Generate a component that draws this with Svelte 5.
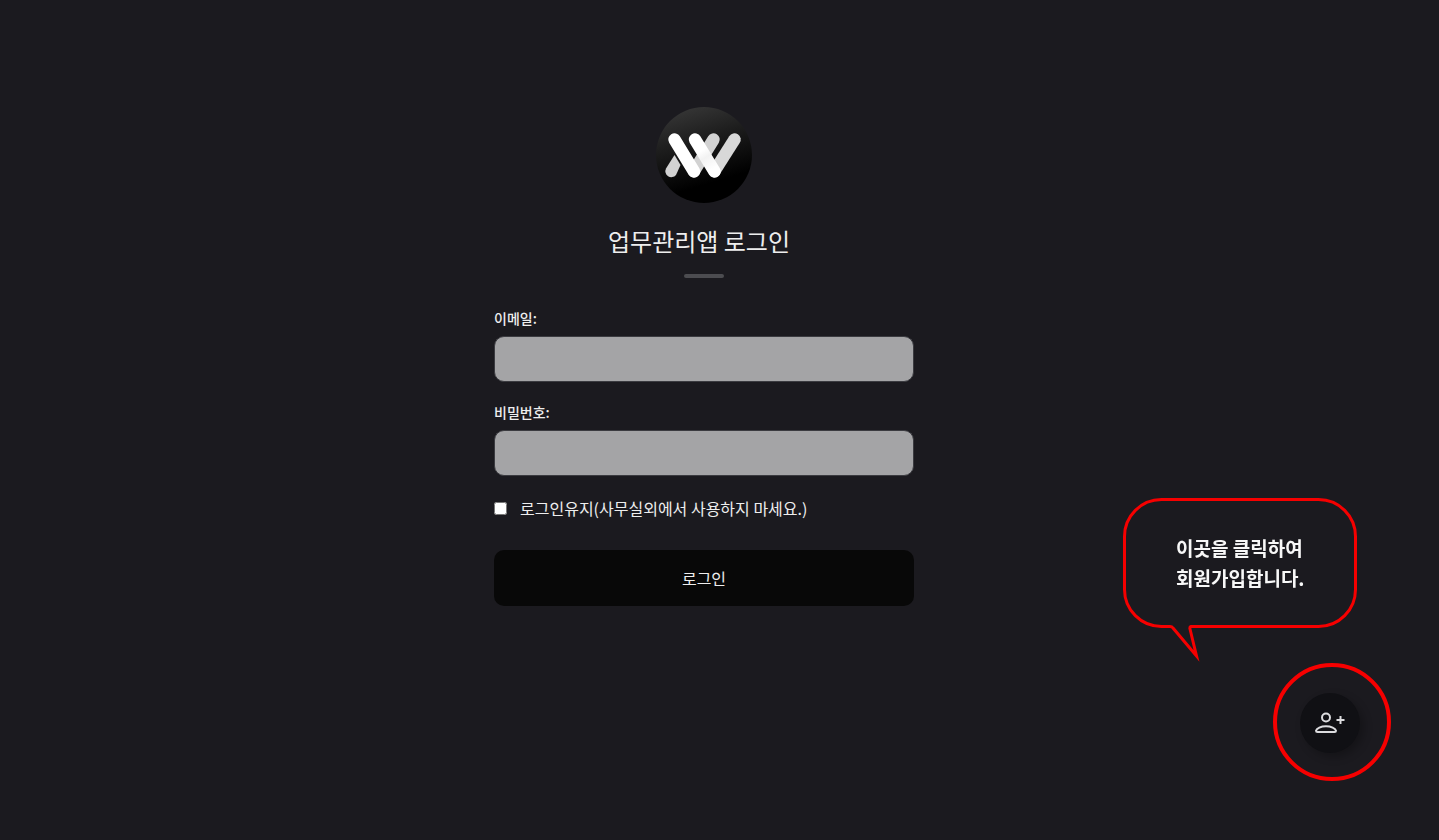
<script>
    let email = ''
    let password = ''
    let keepLogin = false
</script>

<main>
    <form class="login" on:submit|preventDefault>
        <svg class="logo" viewBox="0 0 96 96" role="img" aria-label="W">
            <defs>
                <linearGradient id="disc" x1="0.3" y1="0" x2="0.6" y2="1">
                    <stop offset="0" stop-color="#363636"/>
                    <stop offset="0.35" stop-color="#1d1d1d"/>
                    <stop offset="0.8" stop-color="#000"/>
                </linearGradient>
                <linearGradient id="cross" gradientUnits="userSpaceOnUse" x1="39" y1="32" x2="59" y2="65">
                    <stop offset="0.35" stop-color="#fff"/>
                    <stop offset="0.55" stop-color="#f2f2f2"/>
                    <stop offset="0.9" stop-color="#fff"/>
                </linearGradient>
            </defs>
            <circle cx="48" cy="48" r="48" fill="url(#disc)"/>
            <path d="M18.500 48 24.500 58 20 68A6 6 0 0 1 10 61.500Z" fill="#d2d2d2"/>
            <g fill="none" stroke-width="12.500" stroke-linecap="round">
                <path d="M38 64 57.500 32.500" stroke="#d2d2d2"/>
                <path d="M58.500 64 78.500 32.500" stroke="#d8d8d8"/>
                <path d="M18.500 32.500 38 64.500" stroke="#fff"/>
                <path d="M39 32.500 58.500 64.500" stroke="url(#cross)"/>
            </g>
        </svg>

        <h1>업무관리앱 로그인</h1>
        <div class="bar"></div>

        <div class="field">
            <label for="email">이메일:</label>
            <input id="email" type="email" bind:value={email}>
        </div>
        <div class="field">
            <label for="password">비밀번호:</label>
            <input id="password" type="password" bind:value={password}>
        </div>

        <label class="keep">
            <input type="checkbox" bind:checked={keepLogin}>
            <span>로그인유지(사무실외에서 사용하지 마세요.)</span>
        </label>

        <button type="submit" class="submit">로그인</button>
    </form>
</main>

<aside class="guide">
    <div class="bubble">
        <svg viewBox="0 0 234 166" fill="none" stroke="#f60000" stroke-width="3" stroke-miterlimit="10">
            <path d="M38.500 1.500H195.500A37 37 0 0 1 232.500 38.500V91.500A37 37 0 0 1 195.500 128.500H68Q66.500 129 67 131L73.500 158 50 130Q49 128.500 47 128.500H38.500A37 37 0 0 1 1.500 91.500V38.500A37 37 0 0 1 38.500 1.500Z"/>
        </svg>
        <p>이곳을 클릭하여<br>회원가입합니다.</p>
    </div>
    <div class="ring">
        <button type="button" class="join" aria-label="회원가입">
            <svg viewBox="0 0 32 24" fill="none" stroke="#dcdcdf" stroke-width="2">
                <circle cx="12" cy="6.500" r="4"/>
                <path d="M26.500 5V13M22.500 9H30.500"/>
                <path d="M2 19.800C2.500 17.300 7 15.200 12 15.200S21.500 17.300 22 19.800Q22 21 20.500 21H3.500Q2 21 2 19.800Z"/>
            </svg>
        </button>
    </div>
</aside>

<style>
    :global(body) {
        background: #1b1a1f;
        color: #eee;
        font-family: "Noto Sans CJK KR", sans-serif;
    }

    main {
        display: flex;
        justify-content: center;
        padding: 107px 31px 0 0;
    }

    .login {
        display: flex;
        flex-direction: column;
        width: 420px;
    }

    .logo {
        align-self: center;
        width: 96px;
        height: 96px;
    }

    h1 {
        margin: 20px 0 0;
        padding-right: 10px;
        font-size: 24px;
        font-weight: 400;
        line-height: 36px;
        text-align: center;
    }

    .bar {
        align-self: center;
        width: 40px;
        height: 4px;
        margin: 15px 0 30px;
        border-radius: 2px;
        background: #4c4c50;
    }

    .field {
        display: flex;
        flex-direction: column;
        gap: 8px;
        margin-bottom: 20px;
    }

    .field label {
        font-size: 14px;
        font-weight: 500;
        line-height: 20px;
    }

    .field input {
        box-sizing: border-box;
        height: 46px;
        padding: 0 16px;
        border: 1px solid #3b3b40;
        border-radius: 10px;
        outline: none;
        background: #a4a4a6;
        font: inherit;
    }

    .keep {
        display: flex;
        align-items: center;
        gap: 13px;
        font-size: 16px;
        line-height: 24px;
    }

    .keep input {
        width: 13px;
        height: 13px;
        margin: 0;
    }

    button {
        border: none;
        color: inherit;
        font: inherit;
        cursor: pointer;
    }

    .submit {
        height: 56px;
        margin-top: 30px;
        border-radius: 10px;
        background: #080808;
        font-size: 16px;
    }

    /* sits over the page in the lower right corner */
    .guide {
        position: fixed;
        right: 48px;
        bottom: 59px;
        display: flex;
        flex-direction: column;
        align-items: flex-end;
    }

    .bubble {
        position: relative;
        width: 234px;
        height: 165px;
        margin-right: 34px;
    }

    .bubble svg {
        position: absolute;
        top: 0;
        left: 0;
        width: 234px;
        height: 166px;
    }

    .bubble p {
        margin: 0;
        padding: 35px 0 0 53px;
        color: #f8f8f8;
        font-size: 19px;
        font-weight: 700;
        line-height: 30px;
    }

    .ring {
        display: flex;
        align-items: center;
        justify-content: center;
        box-sizing: border-box;
        width: 118px;
        height: 118px;
        padding: 2px 4px 0 0;
        border: 4px solid #f60000;
        border-radius: 50%;
    }

    .join {
        display: flex;
        align-items: center;
        justify-content: center;
        width: 60px;
        height: 60px;
        padding: 0;
        border-radius: 50%;
        background: #101014;
        box-shadow: 4px 4px 8px rgba(0, 0, 0, 0.25);
    }

    .join svg {
        width: 32px;
        height: 24px;
    }
</style>
